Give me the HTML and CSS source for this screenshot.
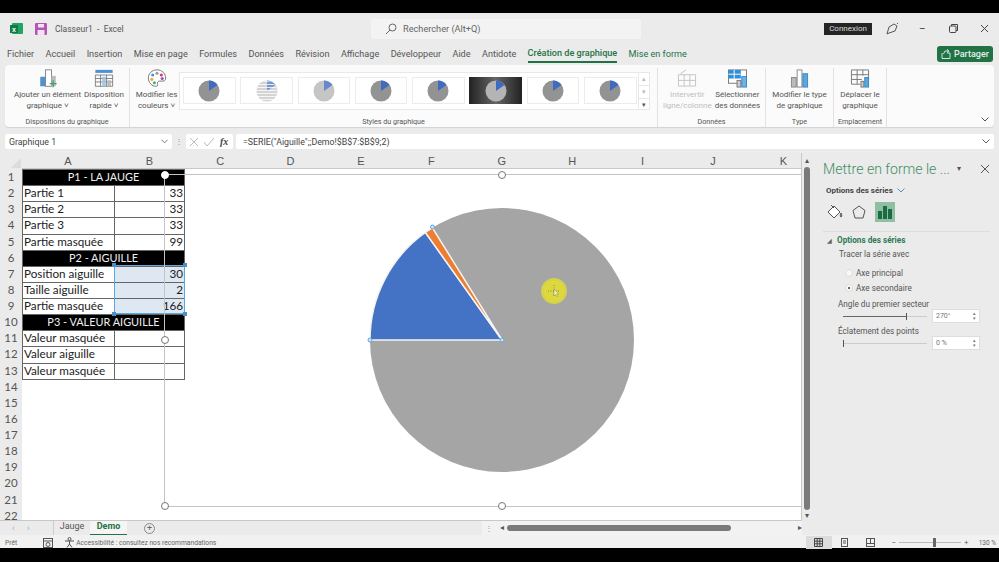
FILE: index.html
```html
<!DOCTYPE html>
<html lang="fr">
<head>
    <meta charset="UTF-8">
    <title>Classeur1 - Excel</title>
    <link rel="stylesheet" href="styles.css">
</head>
<body>
    <svg class="defs" width="0" height="0">
        <symbol id="thumb" viewBox="0 0 24 24">
            <circle cx="12" cy="12" r="10.5" fill="currentColor"/>
            <path d="M12 12V1.5A10.5 10.5 0 0 1 20.500 6Z" fill="#3f6cc0"/>
        </symbol>
        <symbol id="chev" viewBox="0 0 8 5">
            <path d="M.5 .5L4 4L7.500 .5" fill="none" stroke="currentColor"/>
        </symbol>
    </svg>
    <div class="app">
        <div class="titlebar">
            <div class="title-left">
                <svg class="xl-logo" width="13" height="13" viewBox="0 0 13 13"><rect x="2" y="1" width="11" height="11" rx="1" fill="#21a366"/><rect x="0" y="3" width="8" height="8" fill="#107c41"/><text x="2" y="9.5" class="xl-x">x</text></svg>
                <svg class="save" width="12" height="12" viewBox="0 0 12 12"><rect width="12" height="12" rx="1" fill="#b455b5"/><rect x="3" y="1" width="6" height="3.5" fill="#f0e4f0"/><rect x="2.5" y="7" width="7" height="5" fill="#f0e4f0"/></svg>
                <span class="doc-name">Classeur1 &nbsp;-&nbsp; Excel</span>
            </div>
            <div class="search">
                <svg width="12" height="12" viewBox="0 0 12 12" fill="none" stroke="#666"><circle cx="7.5" cy="4.5" r="3.5"/><path d="M5 7L1 11"/></svg>
                <span>Rechercher (Alt+Q)</span>
            </div>
            <div class="title-right">
                <span class="connexion">Connexion</span>
                <svg width="13" height="13" viewBox="0 0 13 13" fill="none" stroke="#555"><path d="M1 12L3 5L8 2L11 4L9 9L3 11Z"/><path d="M11 1L12 2"/></svg>
                <span class="win-btn">&#8211;</span>
                <svg class="win-btn" width="9" height="9" viewBox="0 0 9 9" fill="none" stroke="#444"><rect x="0.5" y="2" width="6.5" height="6.5" rx="1"/><path d="M2.5 2V0.5H8.5V6.5H7"/></svg>
                <svg class="win-btn" width="9" height="9" viewBox="0 0 9 9" stroke="#444"><path d="M1 1L8 8M8 1L1 8"/></svg>
            </div>
        </div>

        <div class="tabs">
            <span>Fichier</span><span>Accueil</span><span>Insertion</span><span>Mise en page</span><span>Formules</span><span>Données</span><span>Révision</span><span>Affichage</span><span>Développeur</span><span>Aide</span><span>Antidote</span>
            <span class="tab-active">Création de graphique</span><span class="tab-green">Mise en forme</span>
            <button class="share">
                <svg width="10" height="10" viewBox="0 0 10 10" fill="none" stroke="#cfe6d9"><path d="M1 4V9.5H9V4H6M2.5 5L4 2H7M6 0.5L8 2L6 3.5"/></svg>
                Partager
            </button>
        </div>

        <div class="ribbon">
            <div class="group group-disp">
                <div class="group-items">
                    <div class="rb-btn btn-add">
                        <svg width="24" height="22" viewBox="0 0 24 22"><rect x="3" y="9" width="6" height="11" fill="#4b93d1"/><rect x="9" y="1" width="7" height="19" fill="#fff" stroke="#777"/><rect x="16" y="8" width="5" height="12" fill="#bbb"/><path d="M18 13V21M14 17H22" stroke="#3fa56a" stroke-width="1.5"/></svg>
                        <span>Ajouter un élément<br>graphique ˅</span>
                    </div>
                    <div class="rb-btn btn-layout">
                        <svg width="22" height="22" viewBox="0 0 22 22"><rect x="1" y="1" width="20" height="3.5" fill="#4b93d1"/><path d="M1 7H21M1 11H21M1 15H21M1 20H21M1 7V20M7 7V20M14 7V20M21 7V20" stroke="#777" fill="none"/><rect x="9" y="9" width="4" height="11" fill="#9ec7e8"/><rect x="15" y="13" width="4" height="7" fill="#bbb"/></svg>
                        <span>Disposition<br>rapide ˅</span>
                    </div>
                </div>
                <div class="group-label">Dispositions du graphique</div>
            </div>
            <div class="group group-styles">
                <div class="group-items">
                    <div class="rb-btn btn-colors">
                        <svg width="22" height="22" viewBox="0 0 22 22"><path d="M11 1C5 1 1 5.5 1 10.5S5 20 10 20C12 20 12 18 11.5 17S12 14 14 14H18C20 14 21 12.500 21 10.500C21 5.500 17 1 11 1Z" fill="#fff" stroke="#666"/><circle cx="6" cy="7" r="1.800" fill="#4b93d1"/><circle cx="11" cy="5" r="1.800" fill="#999"/><circle cx="16" cy="7" r="1.800" fill="#d13f6b"/><circle cx="17" cy="11" r="1.800" fill="#9a54b8"/><circle cx="5" cy="12" r="1.800" fill="#e3b23c"/><circle cx="8" cy="16" r="1.800" fill="#4caf6d"/></svg>
                        <span>Modifier les<br>couleurs ˅</span>
                    </div>
                    <div class="gallery">
                        <div class="thumb"><svg width="24" height="24"><use href="#thumb"/></svg></div>
                        <div class="thumb thumb-lines"><svg width="24" height="24"><use href="#thumb"/></svg></div>
                        <div class="thumb thumb-pale"><svg width="24" height="24"><use href="#thumb"/></svg></div>
                        <div class="thumb"><svg width="24" height="24"><use href="#thumb"/></svg></div>
                        <div class="thumb"><svg width="24" height="24"><use href="#thumb"/></svg></div>
                        <div class="thumb thumb-dark"><svg width="24" height="24"><use href="#thumb"/></svg></div>
                        <div class="thumb"><svg width="24" height="24"><use href="#thumb"/></svg></div>
                        <div class="thumb"><svg width="24" height="24"><use href="#thumb"/></svg></div>
                        <div class="gallery-arrows"><span>▴</span><span>▾</span><span class="more">▾</span></div>
                    </div>
                </div>
                <div class="group-label">Styles du graphique</div>
            </div>
            <div class="group group-data">
                <div class="group-items">
                    <div class="rb-btn btn-switch off">
                        <svg width="20" height="20" viewBox="0 0 20 20"><path d="M1 6H19M1 12H19M1 18H19M1 6V18M7 6V18M13 6V18M19 6V18" stroke="#c4c4c4" fill="none"/><path d="M3 5L9 1" stroke="#c4c4c4"/></svg>
                        <span>Intervertir<br>ligne/colonne</span>
                    </div>
                    <div class="rb-btn btn-select">
                        <svg width="21" height="20" viewBox="0 0 21 20"><rect x="1" y="1" width="19" height="14" fill="#fff" stroke="#777"/><rect x="1" y="1" width="13" height="9" fill="#2f8fd8"/><path d="M1 5.500H14M7 1V10" stroke="#fff"/><rect x="10" y="12" width="4" height="7" fill="#ccc" stroke="#777"/><rect x="15" y="8" width="5" height="11" fill="#6db3e6" stroke="#3b86c4"/></svg>
                        <span>Sélectionner<br>des données</span>
                    </div>
                </div>
                <div class="group-label">Données</div>
            </div>
            <div class="group group-type">
                <div class="group-items">
                    <div class="rb-btn btn-type">
                        <svg width="20" height="20" viewBox="0 0 20 20"><rect x="1" y="9" width="5" height="10" fill="#bbb" stroke="#888"/><rect x="7" y="1" width="5" height="18" fill="#fff" stroke="#888"/><rect x="13" y="5" width="5" height="14" fill="#5ba7de" stroke="#3b86c4"/></svg>
                        <span>Modifier le type<br>de graphique</span>
                    </div>
                </div>
                <div class="group-label">Type</div>
            </div>
            <div class="group group-place">
                <div class="group-items">
                    <div class="rb-btn btn-move">
                        <svg width="20" height="20" viewBox="0 0 20 20"><path d="M1 1H19V12M1 1V16H10M1 6H19M1 11H12M7 1V16M13 1V7" stroke="#777" fill="none"/><rect x="11" y="13" width="3" height="6" fill="#ccc" stroke="#777"/><rect x="15" y="9" width="4" height="10" fill="#5ba7de" stroke="#3b86c4"/></svg>
                        <span>Déplacer le<br>graphique</span>
                    </div>
                </div>
                <div class="group-label">Emplacement</div>
            </div>
            <svg class="ribbon-collapse" width="8" height="5"><use href="#chev"/></svg>
        </div>

        <div class="formula-row">
            <div class="name-box"><span>Graphique 1</span><svg class="chev" width="7" height="5"><use href="#chev"/></svg></div>
            <span class="fx-dots">⋮</span>
            <div class="fx-btns">
                <svg width="8" height="8" viewBox="0 0 8 8" stroke="#bbb"><path d="M0 0L8 8M8 0L0 8"/></svg>
                <svg width="10" height="8" viewBox="0 0 10 8" stroke="#bbb" fill="none"><path d="M0 4L3 8L10 0"/></svg>
                <i>fx</i>
            </div>
            <div class="formula"><span>=SERIE("Aiguille";;Demo!$B$7:$B$9;2)</span><svg class="chev" width="8" height="5"><use href="#chev"/></svg></div>
        </div>

        <div class="workspace">
            <div class="sheet-wrap">
                <div class="sheet-main">
                    <div class="sheet-grid">
                        <div class="corner"><span></span></div>
                        <div class="col-heads">
                            <span class="col-a">A</span><span class="col-b">B</span><span>C</span><span>D</span><span>E</span><span>F</span><span>G</span><span>H</span><span>I</span><span>J</span><span>K</span>
                        </div>
                        <div class="row-heads">
                            <span>1</span><span>2</span><span>3</span><span>4</span><span>5</span><span>6</span><span>7</span><span>8</span><span>9</span><span>10</span><span>11</span><span>12</span><span>13</span><span>14</span><span>15</span><span>16</span><span>17</span><span>18</span><span>19</span><span>20</span><span>21</span><span>22</span>
                        </div>
                        <div class="cells">
                            <table class="data">
                                <colgroup><col class="col-w-a"><col class="col-w-b"></colgroup>
                                <tr class="head"><td colspan="2">P1 - LA JAUGE</td></tr>
                                <tr><td>Partie 1</td><td class="num">33</td></tr>
                                <tr><td>Partie 2</td><td class="num">33</td></tr>
                                <tr><td>Partie 3</td><td class="num">33</td></tr>
                                <tr><td>Partie masquée</td><td class="num">99</td></tr>
                                <tr class="head"><td colspan="2">P2 - AIGUILLE</td></tr>
                                <tr><td>Position aiguille</td><td class="num sel">30</td></tr>
                                <tr><td>Taille aiguille</td><td class="num sel">2</td></tr>
                                <tr><td>Partie masquée</td><td class="num sel">166</td></tr>
                                <tr class="head"><td colspan="2">P3 - VALEUR AIGUILLE</td></tr>
                                <tr><td>Valeur masquée</td><td></td></tr>
                                <tr><td>Valeur aiguille</td><td></td></tr>
                                <tr><td>Valeur masquée</td><td></td></tr>
                            </table>
                            <div class="sel-box">
                                <i class="dot d1"></i><i class="dot d2"></i><i class="dot d3"></i><i class="dot d4"></i>
                            </div>
                            <div class="chart">
                                <i class="handle h-tl"></i><i class="handle h-tc"></i><i class="handle h-ml"></i><i class="handle h-bl"></i><i class="handle h-bc"></i>
                                <svg class="pie" width="270" height="270" viewBox="0 0 270 270">
                                    <circle cx="135" cy="135" r="132" fill="#a5a5a5"/>
                                    <path d="M135 135L3 135A132 132 0 0 1 58.400 27.500Z" fill="#4472c4" stroke="#f4f4f4" stroke-width="1.500"/>
                                    <path d="M135 135L58.400 27.500A132 132 0 0 1 65.400 22.800Z" fill="#ed7d31" stroke="#f4f4f4" stroke-width="1.500"/>
                                    <circle cx="3" cy="135" r="2" fill="#cfe3f3" stroke="#5ba7de"/>
                                    <circle cx="135" cy="135" r="2" fill="#cfe3f3" stroke="#5ba7de"/>
                                    <circle cx="65.500" cy="22" r="2" fill="#cfe3f3" stroke="#5ba7de"/>
                                </svg>
                            </div>
                            <div class="pointer">
                                <svg width="12" height="12" viewBox="0 0 12 12"><path d="M6 0V12M0 6H12" stroke="#6b6b30" stroke-width=".7" stroke-dasharray="1 1.500" fill="none"/><path d="M6 4V11L7.500 9.500L9 12L10 11.500L8.500 9H10.500Z" fill="#f5f0b0" stroke="#777" stroke-width=".4"/></svg>
                            </div>
                        </div>
                    </div>
                    <div class="v-scroll">
                        <span class="arrow">▴</span>
                        <div class="v-thumb"></div>
                        <span class="arrow">▾</span>
                    </div>
                </div>
                <div class="sheet-tabs">
                    <span class="nav">‹</span><span class="nav">›</span>
                    <span class="sheet-tab">Jauge</span>
                    <span class="sheet-tab tab-on">Demo</span>
                    <span class="add-sheet">+</span>
                    <div class="h-scroll">
                        <span class="fx-dots">⋮</span>
                        <span class="arrow arrow-left">◂</span>
                        <div class="h-track"><div class="h-thumb"></div></div>
                        <span class="arrow">▸</span>
                    </div>
                </div>
            </div>

            <aside class="pane">
                <div class="pane-head">
                    <h2>Mettre en forme le ...</h2>
                    <span class="pane-menu">▾</span>
                    <svg width="8" height="8" viewBox="0 0 8 8" stroke="#555"><path d="M0 0L8 8M8 0L0 8"/></svg>
                </div>
                <div class="pane-sub">Options des séries <svg class="blue-chev" width="8" height="5"><use href="#chev"/></svg></div>
                <div class="pane-icons">
                    <svg width="16" height="16" viewBox="0 0 16 16" fill="none" stroke="#555"><path d="M1 8L7 2L13 8L7 14Z" fill="#fff"/><path d="M4 1L7 4"/><path d="M14 9C15 11 15 13 14 13C13 13 13 11 14 9Z" fill="#888"/></svg>
                    <svg width="14" height="14" viewBox="0 0 14 14" fill="none" stroke="#555"><path d="M7 1L13 5.500L11 13H3L1 5.500Z"/></svg>
                    <div class="icon-on">
                        <svg width="14" height="14" viewBox="0 0 14 14" fill="#1d6b42"><rect x="0" y="6" width="4" height="8"/><rect x="5" y="1" width="4" height="13"/><rect x="10" y="4" width="4" height="10"/></svg>
                    </div>
                </div>
                <div class="pane-body">
                    <div class="section-title"><span class="tri">◢</span> Options des séries</div>
                    <div class="plot-label">Tracer la série avec</div>
                    <label class="radio"><i></i>Axe principal</label>
                    <label class="radio radio-on"><i></i>Axe secondaire</label>
                    <div class="field-label">Angle du premier secteur</div>
                    <div class="slider-row">
                        <div class="slider"><div class="slider-fill"></div><i class="tick-a"></i></div>
                        <div class="spin"><span>270°</span><span class="spin-arrows">▴<br>▾</span></div>
                    </div>
                    <div class="field-label">Éclatement des points</div>
                    <div class="slider-row">
                        <div class="slider"><i class="tick-b"></i></div>
                        <div class="spin"><span>0 %</span><span class="spin-arrows">▴<br>▾</span></div>
                    </div>
                </div>
            </aside>
        </div>

        <div class="status">
            <span class="ready">Prêt</span>
            <svg class="st-macro" width="10" height="10" viewBox="0 0 10 10" fill="none" stroke="#555"><rect x=".5" y=".5" width="9" height="9"/><path d="M.5 3H9.500"/><circle cx="5" cy="6.500" r="2"/></svg>
            <svg class="st-acc" width="11" height="11" viewBox="0 0 11 11" fill="none" stroke="#555"><circle cx="5.500" cy="2" r="1.500"/><path d="M1 4H10M5.500 4V7L3 10.500M5.500 7L8 10.500"/></svg>
            <span class="acc-text">Accessibilité : consultez nos recommandations</span>
            <div class="status-right">
                <span class="view view-on"><svg width="9" height="9" viewBox="0 0 9 9" fill="none" stroke="#444"><path d="M.5 .5H8.500V8.500H.5ZM.5 3.200H8.500M.5 5.800H8.500M3.200 .5V8.500M5.800 .5V8.500"/></svg></span>
                <span class="view"><svg width="9" height="9" viewBox="0 0 9 9" fill="none" stroke="#555"><rect x="1.500" y=".5" width="6" height="8"/><path d="M3 3H6M3 5H6"/></svg></span>
                <span class="view view-last"><svg width="9" height="9" viewBox="0 0 9 9" fill="none" stroke="#555"><rect x=".5" y=".5" width="8" height="8"/><path d="M4.500 .5V5.500M.5 5.500H8.500"/></svg></span>
                <span class="zoom-sign">−</span>
                <div class="zoom-track"><i></i></div>
                <span class="zoom-sign">+</span>
                <span class="zoom-val">130 %</span>
            </div>
        </div>
    </div>
</body>
</html>
```

FILE: styles.css
```css
* { box-sizing: border-box; }
html, body { margin: 0; height: 100%; }
body {
    background: #000;
    font-family: Roboto, "Liberation Sans", sans-serif;
    color: #444;
    overflow: hidden;
}
.defs { display: block; height: 0; }
.app {
    margin-top: 13px;
    height: 535px;
    width: 999px;
    background: #ebebeb;
    display: flex;
    flex-direction: column;
    font-size: 8px;
}

/* title bar */
.titlebar {
    height: 31px;
    flex: none;
    display: flex;
    align-items: center;
    padding: 0 9px 0 10px;
    position: relative;
}
.title-left { display: flex; align-items: center; width: 361px; flex: none; }
.xl-x { font-size: 7px; fill: #fff; font-weight: bold; font-family: "Liberation Sans", sans-serif; }
.save { margin-left: 12px; }
.doc-name { margin-left: 8px; font-size: 8.500px; color: #555; }
.search {
    width: 270px;
    height: 20px;
    flex: none;
    background: #f3f3f3;
    display: flex;
    align-items: center;
    gap: 6px;
    padding-left: 14px;
    font-size: 9.200px;
    color: #666;
    border-radius: 2px;
}
.title-right { display: flex; align-items: center; margin-left: 183px; }
.connexion {
    background: #252525;
    color: #ddd;
    width: 48px;
    height: 12px;
    line-height: 12px;
    text-align: center;
    font-size: 8px;
    margin-right: 14px;
}
.win-btn { margin-left: 22px; color: #444; font-size: 10px; }
.title-right span.win-btn { margin-left: 20px; margin-right: 1px; }

/* tabs */
.tabs {
    height: 21px;
    flex: none;
    display: flex;
    align-items: center;
    gap: 11.400px;
    padding: 0 0 1px 7px;
    font-size: 9.100px;
    color: #555;
    position: relative;
}
.tab-active {
    color: #217346;
    font-weight: 500;
    border-bottom: 2px solid #217346;
    height: 16px;
    margin-top: 2px;
    line-height: 13px;
}
.tab-green { color: #217346; }
.share {
    margin-left: auto;
    margin-right: 6px;
    background: #217346;
    color: #e6f1ea;
    border: 0;
    border-radius: 3px;
    width: 56px;
    height: 16px;
    font: 500 9px Roboto, sans-serif;
    display: flex;
    align-items: center;
    justify-content: center;
    gap: 3px;
    padding: 0;
}

/* ribbon */
.ribbon {
    height: 62px;
    flex: none;
    margin: 0 5px;
    background: #fbfbfb;
    border-radius: 4px;
    display: flex;
    position: relative;
    box-shadow: 0 1px 1px rgba(0,0,0,.1);
}
.group {
    display: flex;
    flex-direction: column;
    border-right: 1px solid #e2e2e2;
    margin: 3px 0 0;
}
.group-items { flex: 1; display: flex; min-height: 0; }
.group-label {
    text-align: center;
    font-size: 7.200px;
    color: #555;
    height: 11px;
    padding-top: 1px;
    line-height: 10px;
    flex: none;
}
.rb-btn {
    display: flex;
    flex-direction: column;
    align-items: center;
    font-size: 8px;
    line-height: 10.500px;
    color: #555;
    text-align: center;
    white-space: nowrap;
}
.rb-btn svg { height: 19px; margin-bottom: 2px; margin-top: 1px; flex: none; }
.rb-btn.off { color: #bdbdbd; }
.group-disp { width: 125px; }
.group-disp .group-items { gap: 3px; padding-left: 9px; }
.group-styles { width: 528px; }
.group-styles .group-items { padding-left: 6px; }
.btn-add { width: 67px; }
.btn-layout { width: 40px; }
.btn-colors { width: 41px; }
.gallery {
    margin: 4px 0 0 2px;
    width: 471px;
    height: 38px;
    background: #fff;
    border: 1px solid #e8e8e8;
    display: flex;
    gap: 4.800px;
    padding: 4px 3px;
    position: relative;
}
.thumb {
    width: 52.500px;
    height: 27px;
    flex: none;
    border: 1px solid #ececec;
    background: #fff;
    color: #939393;
    display: flex;
    align-items: center;
    justify-content: center;
    position: relative;
}
.thumb-lines { color: #c2c2c2; }
.thumb-lines svg { opacity: .7; }
.thumb-lines::after {
    content: "";
    position: absolute;
    left: 15px;
    top: 3px;
    width: 21px;
    height: 21px;
    border-radius: 50%;
    background: repeating-linear-gradient(rgba(255,255,255,.8) 0 1px, transparent 1px 3px);
}
.thumb-pale { color: #b7b7b7; }
.thumb-pale svg { opacity: .8; }
.thumb-dark { background: linear-gradient(90deg, #222, #666 50%, #222); border: 0; color: #b4b4b4; }
.gallery-arrows {
    position: absolute;
    right: 0;
    top: 0;
    bottom: 0;
    width: 11px;
    border-left: 1px solid #e8e8e8;
    display: flex;
    flex-direction: column;
    font-size: 7px;
    text-align: center;
    color: #bbb;
}
.gallery-arrows span { flex: 1; border-bottom: 1px solid #e8e8e8; line-height: 12px; }
.gallery-arrows .more { border: 0; color: #555; }
.group-data { width: 108px; }
.group-data .group-items { justify-content: center; gap: 3px; }
.group-type { width: 68px; }
.group-type .group-items, .group-place .group-items { justify-content: center; }
.group-place { width: 53px; }
.ribbon-collapse {
    position: absolute;
    right: 5px;
    bottom: 5px;
    color: #555;
}

/* formula bar */
.formula-row {
    height: 15px;
    flex: none;
    margin: 7px 5px 0;
    display: flex;
    align-items: center;
    font-size: 8.800px;
}
.name-box {
    width: 167px;
    height: 15px;
    background: #fff;
    border-radius: 2px;
    display: flex;
    align-items: center;
    justify-content: space-between;
    padding: 0 4px;
}
.chev { color: #666; }
.fx-dots { width: 14px; text-align: center; color: #999; font-size: 8px; flex: none; }
.fx-btns {
    width: 47px;
    height: 15px;
    background: #fff;
    display: flex;
    align-items: center;
    gap: 6px;
    padding-left: 4px;
    border-radius: 2px;
}
.fx-btns i { font: italic bold 10px "Liberation Serif", serif; color: #444; }
.formula {
    flex: 1;
    margin-left: 3px;
    height: 15px;
    background: #fff;
    border-radius: 2px;
    display: flex;
    align-items: center;
    justify-content: space-between;
    padding: 0 4px 0 7px;
}

/* sheet */
.workspace { flex: 1; display: flex; min-height: 0; margin-top: 4px; }
.sheet-wrap { width: 812px; display: flex; flex-direction: column; }
.sheet-main { flex: 1; display: flex; min-height: 0; }
.sheet-grid {
    width: 802px;
    display: grid;
    grid-template-columns: 22px 780px;
    grid-template-rows: 16px 1fr;
    overflow: hidden;
    border-bottom: 1px solid #c8c8c8;
    border-right: 1px solid #c8c8c8;
}
.corner { background: #ebebeb; position: relative; }
.corner span {
    position: absolute;
    right: 1px;
    bottom: 1px;
    border-left: 10px solid transparent;
    border-bottom: 10px solid #dcdcdc;
}
.col-heads {
    display: flex;
    align-items: center;
    background: #ebebeb;
    font-size: 11px;
    color: #555;
    border-bottom: 1px solid #c8c8c8;
    font-family: "Liberation Sans", sans-serif;
}
.col-heads span { width: 70.400px; flex: none; text-align: center; }
.col-heads .col-a { width: 92px; }
.col-heads .col-b { width: 71px; }
.row-heads {
    background: #ebebeb;
    display: flex;
    flex-direction: column;
    font-size: 11.500px;
    color: #555;
    font-family: Lato, sans-serif;
}
.row-heads span { height: 16.130px; line-height: 16px; text-align: center; flex: none; }
.cells { background: #fff; position: relative; overflow: hidden; }
.data {
    border-collapse: collapse;
    table-layout: fixed;
    width: 162px;
    font-family: Lato, sans-serif;
    font-size: 11.700px;
    color: #222;
}
.col-w-a { width: 92px; }
.col-w-b { width: 70px; }
.data td {
    height: 16.130px;
    padding: 0 1px 2px;
    border: 1px solid #666;
    white-space: nowrap;
    line-height: 13px;
}
.data .num { text-align: right; }
.data .sel { background: #dee8f3; }
.data .head td {
    background: #000;
    color: #f0f0f0;
    text-align: center;
    font-size: 10.900px;
}
.sel-box {
    position: absolute;
    left: 92px;
    top: 96.300px;
    width: 71px;
    height: 48.400px;
    border: 1px solid #5ba7de;
}
.dot {
    position: absolute;
    width: 4px;
    height: 4px;
    background: #4a90c8;
}
.d1 { left: -3px; top: -3px; }
.d2 { right: -3px; top: -3px; }
.d3 { left: -3px; bottom: -3px; }
.d4 { right: -3px; bottom: -3px; }

/* chart floats over the cells */
.chart {
    position: absolute;
    left: 142px;
    top: 5px;
    width: 661px;
    height: 333px;
    border: 1px solid #c4c4c4;
}
.handle {
    position: absolute;
    width: 8px;
    height: 8px;
    border-radius: 50%;
    background: #fff;
    border: 1px solid #777;
}
.h-tl { left: -4px; top: -4px; background: #fff; border-color: #fff; }
.h-tc { left: 333px; top: -4px; }
.h-ml { left: -4px; top: 161px; }
.h-bl { left: -4px; bottom: -4px; }
.h-bc { left: 333px; bottom: -4px; }
.pie { position: absolute; left: 201.500px; top: 30px; }
.pointer {
    position: absolute;
    left: 519px;
    top: 109px;
    width: 26px;
    height: 26px;
    border-radius: 50%;
    background: radial-gradient(circle, #dcd83e 55%, rgba(205,205,90,.75) 85%, rgba(185,185,120,.6) 100%);
    display: flex;
    align-items: center;
    justify-content: center;
}
.v-scroll {
    width: 10px;
    display: flex;
    flex-direction: column;
    align-items: center;
    font-size: 7px;
    color: #555;
    background: #ebebeb;
    padding-top: 3px;
}
.v-thumb { flex: 1; width: 6px; background: #7a7a7a; border-radius: 3px; margin: 1px 0; }
.arrow { color: #555; font-size: 8px; line-height: 10px; }
.arrow-left { margin-left: 4px; }

.sheet-tabs {
    height: 14px;
    flex: none;
    display: flex;
    align-items: center;
    font-size: 9px;
    background: #ebebeb;
    padding-left: 12px;
}
.nav { width: 15px; color: #aaa; font-size: 9px; }
.sheet-tab { width: 37px; text-align: center; height: 14px; line-height: 11px; color: #555; }
.nav + .sheet-tab { margin-left: 11px; border-left: 1px solid #ccc; }
.tab-on {
    background: #f5f5f5;
    color: #217346;
    font-weight: 700;
    border-bottom: 1px solid #217346;
}
.add-sheet {
    width: 11px;
    height: 11px;
    border: 1px solid #888;
    border-radius: 50%;
    margin-left: 17px;
    line-height: 8px;
    text-align: center;
    color: #666;
    font-size: 9px;
}
.h-scroll {
    margin-left: auto;
    width: 320px;
    margin-right: 10px;
    display: flex;
    align-items: center;
    background: #f2f2f2;
    height: 14px;
}
.h-track { flex: 1; padding: 0 1px 0 3px; }
.h-thumb { width: 224px; height: 6px; background: #7a7a7a; border-radius: 3px; }

/* side pane */
.pane { flex: 1; padding: 3px 9px 0 11px; }
.pane-head { display: flex; align-items: center; height: 25px; }
.pane-head h2 {
    margin: 0;
    font-size: 14.100px;
    font-weight: 300;
    color: #3f8f66;
    white-space: nowrap;
}
.pane-menu { margin-left: 7px; font-size: 8px; color: #555; }
.pane-head svg { margin-left: auto; margin-right: 1px; }
.pane-sub { font-size: 8px; font-weight: 700; color: #444; margin: 5px 0 0 3px; }
.blue-chev { color: #4a90c8; margin-left: 2px; }
.pane-icons {
    display: flex;
    align-items: center;
    gap: 9px;
    height: 26px;
    margin: 4px 0 0 4px;
}
.icon-on {
    width: 20px;
    height: 20px;
    background: #8fbfa2;
    display: flex;
    align-items: center;
    justify-content: center;
}
.pane-body { border-top: 1px solid #ddd; margin-top: 6px; padding-top: 3px; color: #555; }
.section-title { font-size: 8.200px; font-weight: 700; color: #2f7a55; }
.tri { font-size: 6px; color: #666; margin: 0 3px 0 4px; }
.plot-label { margin: 4px 0 0 16px; font-size: 8.200px; }
.radio { display: flex; align-items: center; margin: 9px 0 0 22px; gap: 3px; font-size: 8.200px; height: 10px; }
.radio i { width: 8px; height: 8px; border-radius: 50%; background: #f7f7f7; border: 1px solid #ddd; }
.radio-on i { background: radial-gradient(circle, #666 25%, #f7f7f7 35%); }
.radio + .radio { margin-top: 5px; }
.field-label { margin: 6px 0 0 15px; font-size: 8.200px; }
.slider-row + .field-label { margin-top: 3px; }
.slider-row { display: flex; align-items: center; margin: 0 0 0 20px; gap: 5px; }
.slider { width: 84px; height: 1px; background: #ccc; position: relative; }
.slider-fill { width: 63px; height: 1px; background: #666; }
.slider i { position: absolute; top: -3px; width: 1px; height: 7px; background: #555; }
.tick-a { left: 63px; }
.tick-b { left: 0; }
.spin {
    width: 48px;
    height: 14px;
    background: #fff;
    border: 1px solid #ddd;
    display: flex;
    align-items: center;
    justify-content: space-between;
    padding: 0 3px;
    font-size: 7px;
    color: #777;
}
.spin-arrows { font-size: 5px; line-height: 5px; }

/* status bar */
.status {
    height: 13px;
    flex: none;
    display: flex;
    align-items: center;
    background: #f1f1f1;
    padding: 2px 0 0 5px;
    font-size: 6.700px;
    color: #666;
}
.st-macro { margin-left: 26px; }
.st-acc { margin-left: 11px; }
.acc-text { margin-left: 1px; }
.status-right { margin-left: auto; display: flex; align-items: center; height: 11px; padding-right: 3px; }
.view { width: 26px; height: 13px; display: flex; align-items: center; justify-content: center; }
.view-on { background: #dcdcdc; }
.view-last { margin-right: 5px; }
.zoom-sign { margin: 0 3px; font-size: 8px; }
.zoom-track { width: 62px; height: 1px; background: #bbb; position: relative; }
.zoom-track i { position: absolute; left: 34px; top: -4px; width: 3px; height: 9px; background: #666; }
.zoom-val { margin-left: 7px; font-size: 6.500px; }
```
